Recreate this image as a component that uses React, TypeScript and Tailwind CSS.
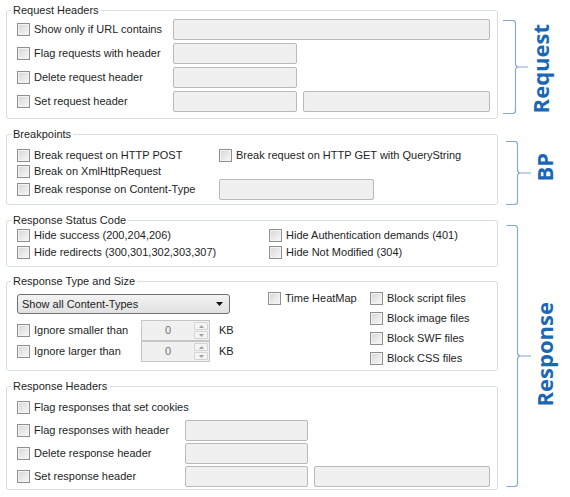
import type { ReactNode } from 'react'

function Check({ label }: { label: string }) {
  return (
    <span className="flex items-center gap-[4px] whitespace-nowrap">
      <span className="h-[13px] w-[13px] shrink-0 border border-[#8f8f8f] bg-linear-to-br from-[#d6d6d6] to-[#f8f8f8] shadow-[inset_0_0_0_1px_#f3f3f3]" />
      <span>{label}</span>
    </span>
  )
}

function Field({ className }: { className: string }) {
  return <div className={`h-[21px] shrink-0 rounded-[2px] border border-[#b9b9b9] bg-[#f0f0f0] ${className}`} />
}

function Group({ title, className, children }: { title: string; className: string; children: ReactNode }) {
  return (
    <fieldset className={`ml-[6px] w-[492px] shrink-0 rounded-[3px] border border-[#d5dee5] pl-[4px] pr-[7px] ${className}`}>
      <legend className="px-[2px] leading-[14px]">{title}</legend>
      <div className="pl-[6px]">{children}</div>
    </fieldset>
  )
}

function Bracket({ h, w, x0, xv, xt }: { h: number; w: number; x0: number; xv: number; xt: number }) {
  const m = h / 2
  const d = `M${x0} 0.5 H${xv - 3} Q${xv} 0.5 ${xv} 3.5 V${m - 3} Q${xv} ${m} ${xv + 3} ${m} H${xt} M${xv + 3} ${m} Q${xv} ${m} ${xv} ${m + 3} V${h - 3.5} Q${xv} ${h - 0.5} ${xv - 3} ${h - 0.5} H${x0}`
  return (
    <svg width={w} height={h} className="shrink-0">
      <path d={d} fill="none" stroke="#86a8d4" strokeWidth="1.2" />
    </svg>
  )
}

function Spinner() {
  return (
    <div className="flex h-[21px] w-[69px] shrink-0 items-center border border-[#c6c6c6] bg-[#f0f0f0]">
      <span className="flex-1 text-center text-[#707070]">0</span>
      <div className="mr-[1px] flex flex-col gap-[1px]">
        {[0, 1].map(i => (
          <div key={i} className="flex h-[8px] w-[14px] items-center justify-center rounded-[1px] border border-[#d4d4d4] bg-[#f4f4f4]">
            <svg width="5" height="3">
              <path d={i === 0 ? 'M0 3H5L2.5 0Z' : 'M0 0H5L2.5 3Z'} fill="#a0a0a0" />
            </svg>
          </div>
        ))}
      </div>
    </div>
  )
}

function Label({ text, className }: { text: string; className: string }) {
  return (
    <span className={`rotate-180 font-['Open_Sans'] text-[22px] font-bold leading-[22px] text-[#1a68b5] [writing-mode:vertical-rl] ${className}`}>
      {text}
    </span>
  )
}

export default function App() {
  return (
    <div className="h-[497px] w-[570px] overflow-hidden bg-white pt-[3px] font-['Liberation_Sans'] text-[11px] text-[#1e1e1e]">
      {/* Request */}
      <div className="flex">
        <Group title="Request Headers" className="h-[116px]">
          <div className="flex flex-col gap-[3px] pt-[2px]">
            <div className="flex h-[21px] items-center">
              <div className="w-[156px]"><Check label="Show only if URL contains" /></div>
              <Field className="w-[317px]" />
            </div>
            <div className="flex h-[21px] items-center">
              <div className="w-[156px]"><Check label="Flag requests with header" /></div>
              <Field className="w-[124px]" />
            </div>
            <div className="flex h-[21px] items-center">
              <div className="w-[156px]"><Check label="Delete request header" /></div>
              <Field className="w-[124px]" />
            </div>
            <div className="flex h-[21px] items-center">
              <div className="w-[156px]"><Check label="Set request header" /></div>
              <Field className="w-[124px]" />
              <Field className="ml-[6px] w-[187px]" />
            </div>
          </div>
        </Group>
        <div className="ml-[2px] mt-[17px] flex items-center self-start">
          <Bracket h={94} w={29} x0={3} xv={15.5} xt={28} />
          <Label text="Request" className="mt-[4px]" />
        </div>
      </div>

      {/* Breakpoints */}
      <div className="mt-[8px] flex">
        <Group title="Breakpoints" className="h-[78px]">
          <div className="grid grid-cols-[202px_1fr] grid-rows-[17px_15px_21px] items-center pt-[6px]">
            <Check label="Break request on HTTP POST" />
            <Check label="Break request on HTTP GET with QueryString" />
            <Check label="Break on XmlHttpRequest" />
            <span />
            <Check label="Break response on Content-Type" />
            <Field className="w-[155px]" />
          </div>
        </Group>
        <div className="ml-[2px] mt-[14px] flex items-center self-start">
          <Bracket h={64} w={33} x0={6} xv={17.5} xt={31} />
          <Label text="BP" className="mb-[11px]" />
        </div>
      </div>

      {/* Response */}
      <div className="mt-[8px] flex">
        <div className="flex flex-col">
          <Group title="Response Status Code" className="h-[54px]">
            <div className="grid grid-cols-[252px_1fr] auto-rows-[17px] items-center">
              <Check label="Hide success (200,204,206)" />
              <Check label="Hide Authentication demands (401)" />
              <Check label="Hide redirects (300,301,302,303,307)" />
              <Check label="Hide Not Modified (304)" />
            </div>
          </Group>

          <Group title="Response Type and Size" className="mt-[7px] h-[97px]">
            <div className="flex">
              <div className="w-[213px] pt-[6px]">
                <div className="flex h-[20px] items-center justify-between rounded-[3px] border border-[#707070] bg-linear-to-b from-[#f3f3f3] to-[#e1e1e1] pl-[4px] pr-[6px]">
                  <span>Show all Content-Types</span>
                  <svg width="7" height="4">
                    <path d="M0 0H7L3.5 4Z" fill="#111" />
                  </svg>
                </div>
                <div className="mt-[6px] flex flex-col">
                  {['Ignore smaller than', 'Ignore larger than'].map(t => (
                    <div key={t} className="flex h-[21px] items-center">
                      <div className="w-[124px] shrink-0"><Check label={t} /></div>
                      <Spinner />
                      <span className="ml-[9px]">KB</span>
                    </div>
                  ))}
                </div>
              </div>
              <div className="ml-[38px] w-[102px]">
                <div className="flex h-[20px] items-center"><Check label="Time HeatMap" /></div>
              </div>
              <div className="flex flex-col">
                {['Block script files', 'Block image files', 'Block SWF files', 'Block CSS files'].map(t => (
                  <div key={t} className="flex h-[20px] items-center"><Check label={t} /></div>
                ))}
              </div>
            </div>
          </Group>

          <Group title="Response Headers" className="mt-[8px] h-[111px]">
            <div className="flex flex-col gap-[2px] pt-[4px]">
              <div className="flex h-[21px] items-center">
                <Check label="Flag responses that set cookies" />
              </div>
              <div className="flex h-[21px] items-center">
                <div className="w-[168px]"><Check label="Flag responses with header" /></div>
                <Field className="w-[123px]" />
              </div>
              <div className="flex h-[21px] items-center">
                <div className="w-[168px]"><Check label="Delete response header" /></div>
                <Field className="w-[123px]" />
              </div>
              <div className="flex h-[21px] items-center">
                <div className="w-[168px]"><Check label="Set response header" /></div>
                <Field className="w-[123px]" />
                <Field className="ml-[6px] w-[176px]" />
              </div>
            </div>
          </Group>
        </div>
        <div className="ml-[2px] mt-[12px] flex items-center self-start">
          <Bracket h={262} w={33} x0={6.5} xv={17.5} xt={31} />
          <Label text="Response" className="mb-[4px]" />
        </div>
      </div>
    </div>
  )
}
